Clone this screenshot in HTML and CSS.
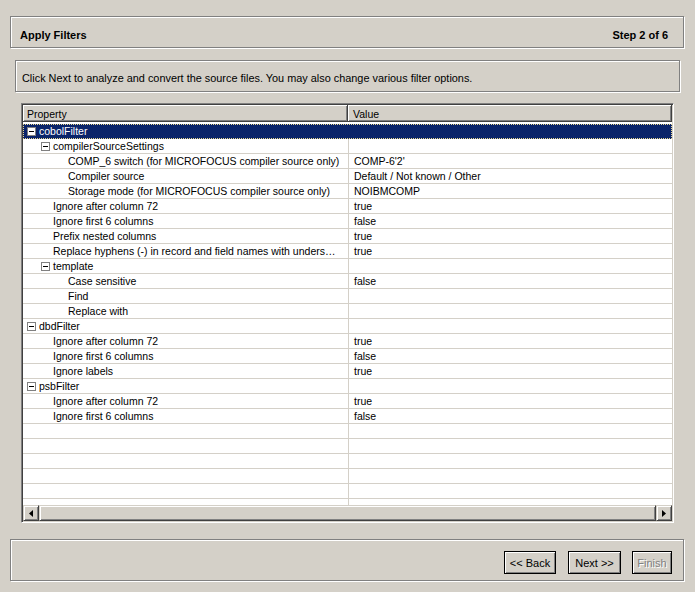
FILE: index.html
```html
<!DOCTYPE html>
<html>
<head>
<meta charset="utf-8">
<link rel="stylesheet" href="styles.css">
</head>
<body>
<div class="page">
  <div class="etched title-bar">
    <span>Apply Filters</span>
    <span>Step 2 of 6</span>
  </div>
  <div class="etched intro">Click Next to analyze and convert the source files. You may also change various filter options.</div>
  <div class="table">
    <div class="thead">
      <div class="th th-prop">Property</div>
      <div class="th th-val">Value</div>
    </div>
    <div class="tbody">
      <div class="row selected"><div class="c1 l0"><span class="exp"></span>cobolFilter</div><div class="c2"></div></div>
      <div class="row"><div class="c1 l1"><span class="exp"></span>compilerSourceSettings</div><div class="c2"></div></div>
      <div class="row"><div class="c1 l2"><span class="sp"></span>COMP_6 switch (for MICROFOCUS compiler source only)</div><div class="c2">COMP-6'2'</div></div>
      <div class="row"><div class="c1 l2"><span class="sp"></span>Compiler source</div><div class="c2">Default / Not known / Other</div></div>
      <div class="row"><div class="c1 l2"><span class="sp"></span>Storage mode (for MICROFOCUS compiler source only)</div><div class="c2">NOIBMCOMP</div></div>
      <div class="row"><div class="c1 l1"><span class="sp"></span>Ignore after column 72</div><div class="c2">true</div></div>
      <div class="row"><div class="c1 l1"><span class="sp"></span>Ignore first 6 columns</div><div class="c2">false</div></div>
      <div class="row"><div class="c1 l1"><span class="sp"></span>Prefix nested columns</div><div class="c2">true</div></div>
      <div class="row"><div class="c1 l1"><span class="sp"></span>Replace hyphens (-) in record and field names with unders…</div><div class="c2">true</div></div>
      <div class="row"><div class="c1 l1"><span class="exp"></span>template</div><div class="c2"></div></div>
      <div class="row"><div class="c1 l2"><span class="sp"></span>Case sensitive</div><div class="c2">false</div></div>
      <div class="row"><div class="c1 l2"><span class="sp"></span>Find</div><div class="c2"></div></div>
      <div class="row"><div class="c1 l2"><span class="sp"></span>Replace with</div><div class="c2"></div></div>
      <div class="row"><div class="c1 l0"><span class="exp"></span>dbdFilter</div><div class="c2"></div></div>
      <div class="row"><div class="c1 l1"><span class="sp"></span>Ignore after column 72</div><div class="c2">true</div></div>
      <div class="row"><div class="c1 l1"><span class="sp"></span>Ignore first 6 columns</div><div class="c2">false</div></div>
      <div class="row"><div class="c1 l1"><span class="sp"></span>Ignore labels</div><div class="c2">true</div></div>
      <div class="row"><div class="c1 l0"><span class="exp"></span>psbFilter</div><div class="c2"></div></div>
      <div class="row"><div class="c1 l1"><span class="sp"></span>Ignore after column 72</div><div class="c2">true</div></div>
      <div class="row"><div class="c1 l1"><span class="sp"></span>Ignore first 6 columns</div><div class="c2">false</div></div>
      <div class="row"><div class="c1"></div><div class="c2"></div></div>
      <div class="row"><div class="c1"></div><div class="c2"></div></div>
      <div class="row"><div class="c1"></div><div class="c2"></div></div>
      <div class="row"><div class="c1"></div><div class="c2"></div></div>
      <div class="row"><div class="c1"></div><div class="c2"></div></div>
      <div class="row"><div class="c1"></div><div class="c2"></div></div>
    </div>
    <div class="hscroll">
      <div class="sbtn"><svg width="4" height="7" viewBox="0 0 4 7"><polygon points="4,0 0,3.5 4,7" fill="#000"/></svg></div>
      <div class="thumb"></div>
      <div class="sbtn"><svg width="4" height="7" viewBox="0 0 4 7"><polygon points="0,0 4,3.5 0,7" fill="#000"/></svg></div>
    </div>
  </div>
  <div class="etched footer">
    <div class="btn btn-back">&lt;&lt; Back</div>
    <div class="btn btn-next">Next &gt;&gt;</div>
    <div class="btn btn-finish disabled">Finish</div>
  </div>
</div>
</body>
</html>
```

FILE: styles.css
```css
html, body {
  margin: 0;
  padding: 0;
}
body {
  width: 695px;
  height: 592px;
  background: #d4d0c8;
  font-family: "Liberation Sans", Arial, sans-serif;
  font-size: 11px;
  color: #000;
  overflow: hidden;
}
.page {
  display: flex;
  flex-direction: column;
  padding-top: 16px;
}
.etched {
  box-sizing: border-box;
  border: 1px solid #808080;
  box-shadow: inset 1px 1px #fff, 1px 1px #fff;
}
.title-bar {
  margin: 0 11px 0 10px;
  height: 32px;
  display: flex;
  align-items: center;
  justify-content: space-between;
  padding: 5px 15px 0 9px;
  font-weight: bold;
}
.intro {
  margin: 12px 15px 0 15px;
  height: 32px;
  display: flex;
  align-items: center;
  padding: 4px 0 0 6px;
  font-size: 10.9px;
}
.table {
  box-sizing: border-box;
  margin: 11px 21px 0 21px;
  height: 420px;
  border: 1px solid;
  border-color: #808080 #fff #fff #808080;
  box-shadow: inset 1px 1px #404040, inset -1px -1px #d4d0c8;
  padding: 1px;
  display: flex;
  flex-direction: column;
  background: #fff;
  font-size: 10.5px;
}
.thead {
  display: flex;
  height: 17px;
  flex: none;
}
.th {
  box-sizing: border-box;
  background: #d4d0c8;
  border-right: 1px solid #404040;
  border-bottom: 1px solid #404040;
  box-shadow: inset 1px 1px #fff, inset -1px -1px #808080;
  display: flex;
  align-items: center;
  padding-top: 1px;
}
.th-prop {
  width: 325px;
  padding-left: 4px;
}
.th-val {
  flex: 1;
  padding-left: 5px;
}
.tbody {
  flex: 1;
  overflow: hidden;
  padding-top: 2px;
  background: #fff;
}
.row {
  display: flex;
  box-sizing: border-box;
  height: 15px;
  border-bottom: 1px solid #d4d0c8;
}
.c1 {
  box-sizing: border-box;
  width: 326px;
  flex: none;
  border-right: 1px solid #d4d0c8;
  display: flex;
  align-items: center;
  white-space: nowrap;
  overflow: hidden;
  line-height: 14px;
}
.c2 {
  flex: 1;
  padding-left: 5px;
  display: flex;
  align-items: center;
  white-space: nowrap;
  line-height: 14px;
}
.l0 { padding-left: 4px; }
.l1 { padding-left: 18px; }
.l2 { padding-left: 33px; }
.exp {
  box-sizing: border-box;
  width: 9px;
  height: 9px;
  border: 1px solid #808080;
  background: #fff;
  margin-right: 3px;
  flex: none;
  display: flex;
  align-items: center;
  justify-content: center;
}
.exp::after {
  content: "";
  width: 5px;
  height: 1px;
  background: #000;
}
.sp {
  width: 12px;
  flex: none;
}
.selected {
  background: #0a246a;
  color: #fff;
  border-bottom-color: #0a246a;
  outline: 1px dotted #e8d890;
  outline-offset: -1px;
}
.selected .c1 {
  border-right-color: #0a246a;
}
.hscroll {
  flex: none;
  height: 16px;
  display: flex;
  background: #d4d0c8;
}
.sbtn, .thumb {
  box-sizing: border-box;
  height: 16px;
  background: #d4d0c8;
  border: 1px solid;
  border-color: #d4d0c8 #404040 #404040 #d4d0c8;
  box-shadow: inset 1px 1px #fff, inset -1px -1px #808080;
}
.sbtn {
  width: 16px;
  flex: none;
  display: flex;
  align-items: center;
  justify-content: center;
}
.thumb {
  flex: 1;
}
.footer {
  margin: 16px 11px 0 10px;
  height: 42px;
  display: flex;
  justify-content: flex-end;
  align-items: flex-start;
  padding: 11px 11px 0 0;
  gap: 11px;
}
.btn {
  box-sizing: border-box;
  height: 23px;
  border: 1px solid #000;
  box-shadow: inset 1px 1px #fff, inset -1px -1px #808080;
  display: flex;
  align-items: center;
  justify-content: center;
  background: #d4d0c8;
}
.btn-back { width: 52px; margin-right: 1px; }
.btn-next { width: 53px; }
.btn-finish { width: 40px; }
.disabled {
  color: #808080;
  text-shadow: 1px 1px #fff;
}
```
